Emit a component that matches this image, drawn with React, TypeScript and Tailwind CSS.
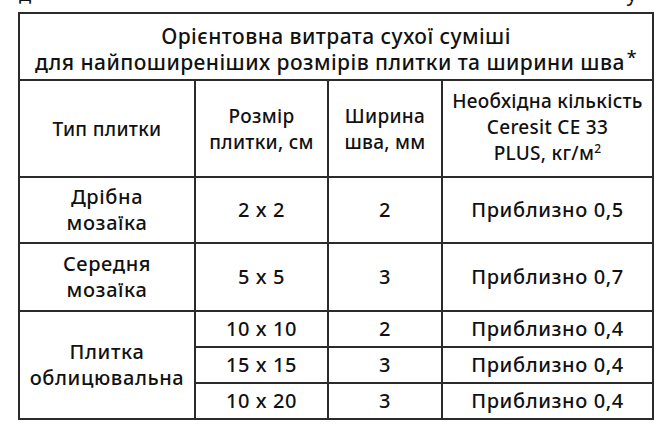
const rows = [
  { type: "Дрібна мозаїка", size: "2 x 2", width: "2", amount: "Приблизно 0,5" },
  { type: "Середня мозаїка", size: "5 x 5", width: "3", amount: "Приблизно 0,7" },
];

const facing = [
  { size: "10 x 10", width: "2", amount: "Приблизно 0,4" },
  { size: "15 x 15", width: "3", amount: "Приблизно 0,4" },
  { size: "10 x 20", width: "3", amount: "Приблизно 0,4" },
];

const cell = "border-2 border-[#2b2b2b] text-center align-middle p-0";

export default function App() {
  return (
    <div
      className="w-[670px] h-[434px] bg-white text-[#111] overflow-hidden"
      style={{ fontFamily: "'Noto Sans', 'Open Sans', sans-serif" }}
    >
      {/* cut-off line of text above the table */}
      <div className="h-[12px] overflow-hidden relative">
        <div className="flex justify-between px-[19px] text-[20px] leading-[20px] -mt-[16px]">
          <span>д</span>
          <span className="mr-[14px]">у</span>
        </div>
      </div>

      <table className="ml-[18px] w-[634px] border-collapse table-fixed border-2 border-[#555]">
        <colgroup>
          <col className="w-[176px]" />
          <col className="w-[133px]" />
          <col className="w-[114px]" />
          <col className="w-[211px]" />
        </colgroup>
        <thead>
          <tr className="h-[67px]">
            <th
              colSpan={4}
              className={`${cell} font-medium text-[21px] leading-[26px] tracking-[0.45px] pt-[5px]`}
            >
              Орієнтовна витрата сухої суміші
              <br />
              для найпоширеніших розмірів плитки та ширини шва
              <span className="relative -top-[6px] ml-[2px] text-[18px]">*</span>
            </th>
          </tr>
          <tr className="h-[97px] text-[19px] leading-[26px] tracking-[0.3px]">
            <th className={`${cell} font-medium`}>Тип плитки</th>
            <th className={`${cell} font-medium`}>
              Розмір
              <br />
              плитки, см
            </th>
            <th className={`${cell} font-medium`}>
              Ширина
              <br />
              шва, мм
            </th>
            <th className={`${cell} font-medium`}>
              Необхідна кількість
              <br />
              Ceresit CE 33
              <br />
              PLUS, кг/м
              <span className="relative -top-[7px] text-[12px]">2</span>
            </th>
          </tr>
        </thead>
        <tbody className="text-[20px] leading-[26px] font-medium tracking-[0.6px]">
          {rows.map((r, i) => (
            <tr key={r.type} className={i === 0 ? "h-[66px]" : "h-[68px]"}>
              <td className={cell}>
                {r.type.split(" ")[0]}
                <br />
                {r.type.split(" ")[1]}
              </td>
              <td className={cell}>{r.size}</td>
              <td className={cell}>{r.width}</td>
              <td className={cell}>{r.amount}</td>
            </tr>
          ))}
          {facing.map((r, i) => (
            <tr key={r.size} className="h-[36px]">
              {i === 0 && (
                <td rowSpan={3} className={cell}>
                  Плитка
                  <br />
                  облицювальна
                </td>
              )}
              <td className={cell}>{r.size}</td>
              <td className={cell}>{r.width}</td>
              <td className={cell}>{r.amount}</td>
            </tr>
          ))}
        </tbody>
      </table>
    </div>
  );
}
